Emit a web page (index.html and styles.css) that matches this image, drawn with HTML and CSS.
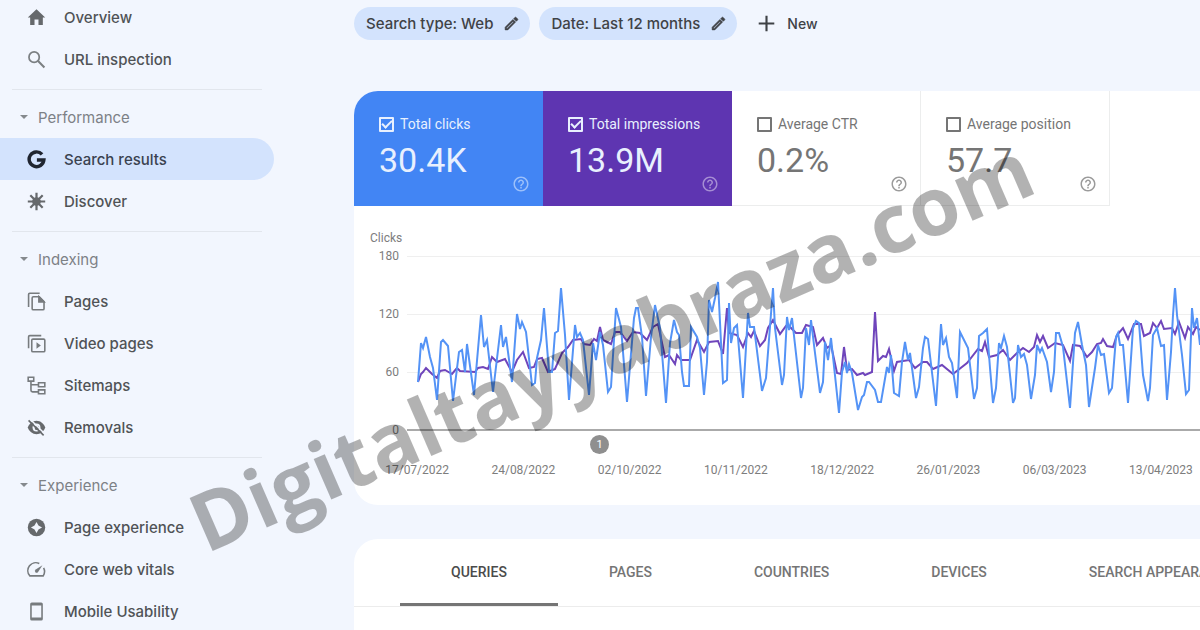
FILE: index.html
```html
<!DOCTYPE html>
<html lang="en">
<head>
<meta charset="utf-8">
<title>Search results</title>
<link rel="stylesheet" href="styles.css">
</head>
<body>
<svg class="defs" aria-hidden="true">
  <symbol id="edit" viewBox="0 0 24 24"><path d="M14.06 9.02l.92.92L5.92 19H5v-.92l9.06-9.06M17.66 3c-.25 0-.51.1-.7.29l-1.83 1.83 3.75 3.75 1.83-1.83c.39-.39.39-1.02 0-1.41l-2.34-2.34c-.2-.2-.45-.29-.71-.29zm-3.6 3.19L3 17.25V21h3.75L17.81 9.94l-3.75-3.75z" stroke="currentColor" stroke-width=".8"/></symbol>
  <symbol id="help" viewBox="0 0 24 24"><path d="M11 18h2v-2h-2v2zm1-16C6.48 2 2 6.48 2 12s4.48 10 10 10 10-4.480 10-10S17.52 2 12 2zm0 18c-4.410 0-8-3.590-8-8s3.590-8 8-8 8 3.590 8 8-3.590 8-8 8zm0-14c-2.210 0-4 1.790-4 4h2c0-1.100.9-2 2-2s2 .9 2 2c0 2-3 1.750-3 5h2c0-2.250 3-2.500 3-5 0-2.210-1.790-4-4-4z"/></symbol>
</svg>
<div class="app">
  <nav class="sidebar" aria-label="Search Console">
    <div class="group">
      <a class="item" href="#"><svg class="icon" viewBox="0 0 24 24"><path d="M9.500 21.500v-7h5v7H20V12h3L12 1.500 1 12h3v9.500z"/></svg>Overview</a>
      <a class="item" href="#"><svg class="icon thin" viewBox="0 0 24 24"><circle cx="9" cy="9" r="6.500" fill="none" stroke="currentColor" stroke-width="2.200"/><path d="M14 14l8 8" fill="none" stroke="currentColor" stroke-width="2.600"/></svg>URL inspection</a>
    </div>
    <div class="group">
      <button class="heading" type="button">Performance</button>
      <a class="item active" href="#" aria-current="page"><svg class="icon" viewBox="0 0 24 24"><path d="M19 5.500A9.300 9.300 0 1 0 21.300 12.500H12.500" fill="none" stroke="currentColor" stroke-width="4.400"/></svg>Search results</a>
      <a class="item" href="#"><svg class="icon" viewBox="0 0 24 24"><circle cx="12" cy="12" r="5.500"/><path d="M12 1v22M1 12h22M4.200 4.200l15.600 15.600M19.800 4.200L4.200 19.800" fill="none" stroke="currentColor" stroke-width="2.800"/></svg>Discover</a>
    </div>
    <div class="group">
      <button class="heading" type="button">Indexing</button>
      <a class="item" href="#"><svg class="icon line" viewBox="0 0 24 24"><path d="M2 19V3q0-1.500 1.500-1.500H16M8 6h7.500L21.500 12v9q0 1.500-1.500 1.500H8Q6.500 22.500 6.500 21V7.500Q6.500 6 8 6z"/><path d="M15 6v6.500h6.500z" fill="currentColor"/></svg>Pages</a>
      <a class="item" href="#"><svg class="icon line" viewBox="0 0 24 24"><path d="M2 18V3.500Q2 2 3.500 2H18M7.500 6.500H21Q22.500 6.500 22.500 8v13q0 1.500-1.500 1.500H7.500Q6 22.500 6 21V8q0-1.500 1.500-1.500z"/><path d="M12 10.500v8l5.500-4z" fill="currentColor" stroke="none"/></svg>Video pages</a>
      <a class="item" href="#"><svg class="icon line" viewBox="0 0 24 24"><path d="M1.500 1.500h7v5h-7zM14.500 8.500h8v5h-8zM14.500 17.500h8v5h-8zM5 6.500V18q0 2 2 2h7.500M5 11h9.500"/></svg>Sitemaps</a>
      <a class="item" href="#"><svg class="icon" viewBox="0 0 24 24"><path d="M12 3.500C7 3.500 2.700 7.100 1 12c1.700 4.900 6 8.500 11 8.500s9.300-3.600 11-8.500c-1.700-4.900-6-8.500-11-8.500z"/><circle class="hole" cx="12" cy="12" r="5"/><circle cx="12.500" cy="12.500" r="2.800"/><path class="cut" d="M4 1.500l19 19"/><path d="M2 3l19 19" fill="none" stroke="currentColor" stroke-width="2"/></svg>Removals</a>
    </div>
    <div class="group">
      <button class="heading" type="button">Experience</button>
      <a class="item" href="#"><svg class="icon" viewBox="0 0 24 24"><circle cx="12" cy="12" r="11"/><path class="hole" d="M12 5l2.500 4.500L19 12l-4.500 2.500L12 19l-2.500-4.500L5 12l4.500-2.500z"/></svg>Page experience</a>
      <a class="item" href="#"><svg class="icon line" viewBox="0 0 24 24"><path d="M15.500 4.500A10 10 0 0 0 3.500 20h17a10 10 0 0 0 .5-10"/><path d="M10.500 15.500q-1.500-2 .5-3.500l8.500-5.500-5.500 8.500q-1.500 2-3.500.500z" fill="currentColor" stroke="none"/></svg>Core web vitals</a>
      <a class="item" href="#"><svg class="icon line" viewBox="0 0 24 24"><path d="M6 1.500h12q1 0 1 1v19q0 1-1 1H6q-1 0-1-1v-19q0-1 1-1zM5 3.500h14M5 20.500h14"/></svg>Mobile Usability</a>
    </div>
  </nav>

  <main class="main">
    <div class="filters">
      <button class="chip" type="button">Search type: Web <svg><use href="#edit"/></svg></button>
      <button class="chip" type="button">Date: Last 12 months <svg><use href="#edit"/></svg></button>
      <button class="new" type="button"><svg viewBox="0 0 24 24"><path d="M12 1v22M1 12h22" fill="none" stroke="currentColor" stroke-width="3"/></svg>New</button>
    </div>

    <section class="card">
      <div class="metrics">
        <div class="metric clicks"><label><input type="checkbox" checked>Total clicks</label><div class="value">30.4K</div><svg class="help"><use href="#help"/></svg></div>
        <div class="metric impressions"><label><input type="checkbox" checked>Total impressions</label><div class="value">13.9M</div><svg class="help"><use href="#help"/></svg></div>
        <div class="metric"><label><input type="checkbox">Average CTR</label><div class="value">0.2%</div><svg class="help"><use href="#help"/></svg></div>
        <div class="metric"><label><input type="checkbox">Average position</label><div class="value">57.7</div><svg class="help"><use href="#help"/></svg></div>
      </div>
      <div class="chart">
        <div class="axis-title">Clicks</div>
        <div class="plot">
          <div class="scale"><span>180</span><span>120</span><span>60</span><span>0</span></div>
          <svg class="lines" viewBox="407 247 793 192" preserveAspectRatio="none" role="img" aria-label="Clicks and impressions over time">
            <path class="grid" d="M407 256.500H1200M407 314.500H1200M407 372.500H1200"/>
            <path class="base" d="M407 430H1200"/>
            <polyline class="s-impressions" points="418,382 421,374 423,372 426,368 432,374 437,378 440,371 445,370 452,374 457,368 460,371 475,372 478,368 483,367 488,369 492,357 497,362 505,359 512,372 517,360 523,352 529,368 534,367 537,359 542,358 548,372 555,369 562,353 568,347 573,340 581,339 584,344 590,345 594,339 597,341 600,327 603,340 611,344 615,332 620,332 627,341 633,332 640,333 647,340 653,327 658,324 665,357 669,355 675,364 677,355 681,360 690,360 697,340 704,352 709,342 718,341 723,354 727,308 729,333 737,335 743,347 748,333 751,337 754,331 760,346 765,340 768,328 773,320 780,334 786,326 790,327 796,333 802,333 806,325 813,327 817,345 823,338 827,348 831,345 837,373 841,374 844,347 847,370 852,369 857,375 863,373 865,375 872,372 875,312 878,361 883,356 886,357 889,349 894,371 897,362 909,360 915,368 923,362 927,362 933,369 942,365 953,374 967,363 978,349 982,351 985,342 989,357 997,355 1003,350 1010,360 1017,353 1023,348 1029,352 1034,347 1037,335 1040,342 1043,336 1048,348 1055,343 1063,345 1070,361 1073,345 1080,346 1087,357 1092,352 1097,344 1101,343 1103,339 1107,346 1113,347 1117,335 1123,328 1128,339 1134,324 1141,324 1144,336 1150,333 1153,323 1157,328 1161,321 1164,329 1172,328 1175,334 1179,322 1185,338 1188,327 1193,334 1196,327 1200,330"/>
            <polyline class="s-clicks" points="418,382 421,343 423,348 426,337 430,357 433,368 437,400 441,342 443,340 448,346 453,401 459,352 462,350 465,372 467,344 474,395 481,315 484,347 487,340 493,392 501,325 503,347 506,337 512,382 517,314 520,329 522,322 526,332 532,385 535,383 537,358 541,340 544,308 549,372 552,372 555,333 558,331 561,288 565,335 569,400 575,325 577,337 580,333 583,340 589,395 593,343 596,360 600,332 603,345 608,392 611,387 616,308 621,327 627,402 634,318 636,308 638,308 642,337 646,396 651,337 655,305 660,328 666,403 670,343 674,320 677,332 679,335 682,372 684,386 689,386 691,327 697,337 700,348 704,395 707,362 709,300 712,312 715,298 718,282 723,383 727,380 729,303 731,343 734,328 737,325 743,398 748,313 750,327 754,327 762,391 766,378 773,288 775,328 782,385 784,375 787,317 789,330 792,318 801,398 803,388 806,328 809,345 811,320 814,345 820,393 823,382 825,342 828,360 831,338 839,413 842,372 845,362 847,373 849,364 852,373 858,410 862,397 864,395 867,382 869,382 875,390 878,402 881,402 887,367 889,373 891,355 894,393 899,396 902,362 905,342 908,360 910,353 916,398 919,387 923,348 925,337 928,339 936,406 941,324 943,345 946,338 949,357 952,363 957,398 960,332 968,348 974,399 977,388 979,336 983,333 987,329 990,368 993,403 996,388 999,343 1001,348 1004,336 1007,347 1013,403 1015,398 1018,345 1021,357 1024,354 1027,365 1031,399 1035,375 1037,345 1040,352 1042,348 1047,362 1051,392 1054,372 1056,333 1059,333 1063,347 1070,408 1075,333 1078,322 1082,345 1086,365 1089,407 1095,368 1098,345 1101,355 1104,354 1109,393 1112,388 1116,337 1118,333 1120,345 1123,345 1128,403 1133,328 1136,321 1139,323 1143,375 1148,401 1150,388 1153,335 1157,328 1161,346 1164,345 1167,400 1171,352 1173,315 1175,288 1177,315 1182,355 1186,394 1189,390 1192,308 1194,328 1197,318 1200,345"/>
          </svg>
          <button class="note" type="button">1</button>
        </div>
        <div class="dates"><span>17/07/2022</span><span>24/08/2022</span><span>02/10/2022</span><span>10/11/2022</span><span>18/12/2022</span><span>26/01/2023</span><span>06/03/2023</span><span>13/04/2023</span></div>
      </div>
    </section>

    <section class="card tables">
      <div class="tabs" role="tablist">
        <button type="button" role="tab" aria-selected="true">QUERIES</button>
        <button type="button" role="tab" aria-selected="false">PAGES</button>
        <button type="button" role="tab" aria-selected="false">COUNTRIES</button>
        <button type="button" role="tab" aria-selected="false">DEVICES</button>
        <button type="button" role="tab" aria-selected="false">SEARCH APPEARANCE</button>
      </div>
    </section>
  </main>
  <div class="watermark">Digitaltayyabraza.com</div>
</div>
</body>
</html>
```
FILE: styles.css
```css
* { box-sizing: border-box; }
body {
  margin: 0;
  background: #f2f6fe;
  color: #44474a;
  font-family: Roboto, "Liberation Sans", sans-serif;
}
button {
  border: 0;
  margin: 0;
  padding: 0;
  background: none;
  color: inherit;
  font: inherit;
}
svg { fill: currentColor; }
.defs { position: absolute; width: 0; height: 0; }

.app {
  position: relative;
  display: flex;
  height: 100vh;
  overflow: hidden;
}

/* Sidebar */
.sidebar {
  flex: 0 0 274px;
  margin-top: -4px;
  font-family: Inter, Roboto, sans-serif;
  font-size: 15px;
}
.group + .group::before {
  content: "";
  display: block;
  height: 1px;
  margin: 9px 12px 6px;
  background: #e2e6ed;
}
.heading {
  display: flex;
  align-items: center;
  gap: 10px;
  height: 42px;
  padding-left: 20px;
  color: #7d8186;
}
.heading::before {
  content: "";
  border: 4px solid transparent;
  border-top-color: #85898d;
  border-bottom: 0;
}
.item {
  display: flex;
  align-items: center;
  gap: 18px;
  height: 42px;
  padding-left: 27px;
  border-radius: 0 21px 21px 0;
  color: #505356;
  font-weight: 500;
  text-decoration: none;
}
.item.active { background: #d3e3fd; color: #3a4250; }
.icon { width: 19px; height: 19px; color: #66696c; }
.active .icon { color: #1f2530; }
.icon.thin { color: #7b7f82; }
.icon.line { fill: none; stroke: #777b7e; stroke-width: 2; color: #777b7e; }
.hole { fill: #f2f6fe; }
.cut { fill: none; stroke: #f2f6fe; stroke-width: 2; }

/* Main column */
.main {
  flex: 1;
  min-width: 0;
  margin-left: 80px;
}
.filters {
  display: flex;
  gap: 9px;
  padding-top: 7px;
  margin-bottom: 51px;
  font-family: Inter, Roboto, sans-serif;
  font-size: 15px;
  font-weight: 500;
}
.chip, .new {
  display: flex;
  align-items: center;
  gap: 10px;
  height: 33px;
  padding: 0 10px 0 12px;
  border-radius: 17px;
  white-space: nowrap;
  color: #3f4246;
}
.chip { background: #d3e3fd; }
.chip svg { width: 17px; height: 17px; }
.new svg { width: 17px; height: 17px; }
.new { gap: 12px; font-size: 14px; }

.card {
  overflow: hidden;
  border-radius: 24px 0 0 24px;
  background: #fff;
}
.metrics {
  display: grid;
  grid-template-columns: repeat(4, 189px);
}
.metric {
  position: relative;
  height: 115px;
  padding: 23px 0 0 25px;
  border: solid #eceded;
  border-width: 0 1px 1px 0;
  color: #757575;
}
.metric label {
  display: flex;
  align-items: center;
  gap: 6px;
  height: 20px;
  font-size: 14px;
  white-space: nowrap;
}
.metric input {
  appearance: none;
  display: grid;
  place-items: center;
  width: 15px;
  height: 15px;
  margin: 0;
  border: 2px solid;
  border-radius: 1px;
  color: inherit;
}
.metric input:checked::after {
  content: "";
  width: 8px;
  height: 4px;
  margin-bottom: 2px;
  border: solid;
  border-width: 0 0 2px 2px;
  transform: rotate(-45deg);
}
.value {
  margin-top: 6px;
  font-size: 34px;
  line-height: 40px;
}
.help {
  position: absolute;
  right: 12px;
  bottom: 12px;
  width: 18px;
  height: 18px;
  color: #9b9b9b;
}
.clicks, .impressions { color: #e8f0fe; }
.clicks { background: #4285f4; border-color: #4285f4; }
.impressions { background: #5e35b1; border-color: #5e35b1; }
.clicks .help { color: #9cc0fa; }
.impressions .help { color: #a58dd3; }

/* Chart */
.chart {
  height: 299px;
  padding: 24px 0 0 16px;
  color: #7d7d7d;
  font-size: 12px;
}
.axis-title { height: 17px; line-height: 16px; }
.plot {
  position: relative;
  display: flex;
  gap: 8px;
}
.scale {
  flex: 0 0 29px;
  display: flex;
  flex-direction: column;
  justify-content: space-between;
  height: 192px;
  line-height: 18px;
  text-align: right;
}
.lines { flex: 1; min-width: 0; height: 192px; fill: none; }
.lines > * { vector-effect: non-scaling-stroke; }
.grid { stroke: #efefef; }
.base { stroke: #aaa; stroke-width: 2; }
.s-clicks { stroke: #5493f6; stroke-width: 2; }
.s-impressions { stroke: #6f45bb; stroke-width: 2; }
.note {
  position: absolute;
  left: 220px;
  top: 188px;
  width: 19px;
  height: 19px;
  border-radius: 50%;
  background: #8f8f8f;
  color: #fff;
  font-size: 11px;
}
.dates {
  display: grid;
  grid-template-columns: repeat(8, 1fr);
  margin: 23px -14px 0 -6px;
  line-height: 16px;
  text-align: center;
}

/* Tabs */
.tables { height: 300px; margin-top: 34px; }
.tabs {
  display: flex;
  height: 68px;
  padding-left: 46px;
  border-bottom: 1px solid #ececec;
  color: #757575;
  font-size: 14px;
  font-weight: 500;
}
.tabs button {
  flex: none;
  padding: 2px 51px 0;
  border-bottom: 3px solid transparent;
  white-space: nowrap;
}
.tabs [aria-selected="true"] { border-color: #757575; color: #4b4b4b; }

/* Diagonal brand mark laid over the whole report */
.watermark {
  position: absolute;
  left: 206px;
  top: 482px;
  color: rgba(0, 0, 0, .3);
  font: 700 81px/81px "Open Sans", "Noto Sans", sans-serif;
  white-space: nowrap;
  transform: rotate(-23.5deg);
  transform-origin: 0 72px;
  pointer-events: none;
}
```
